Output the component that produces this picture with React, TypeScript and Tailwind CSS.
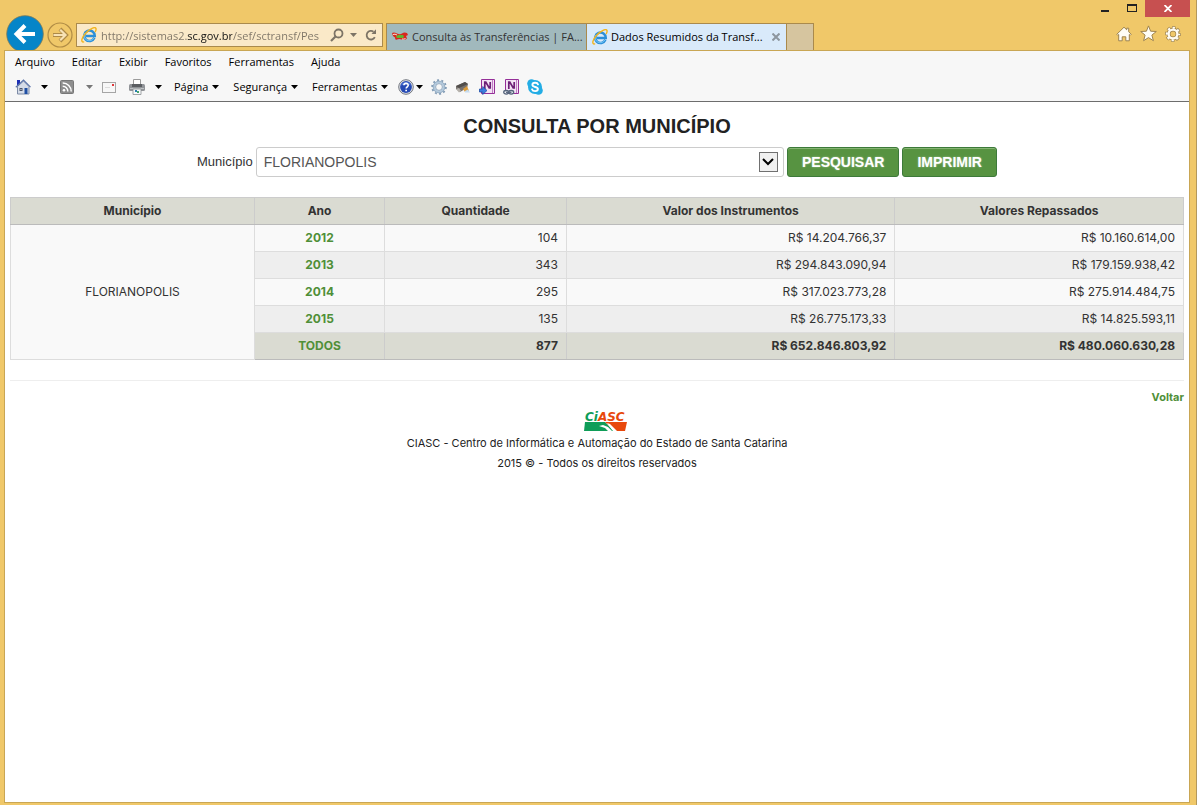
import { useState } from "react";
import type { ReactNode } from "react";

const menuItems = ["Arquivo", "Editar", "Exibir", "Favoritos", "Ferramentas", "Ajuda"];

const rows = [
  { ano: "2012", quantidade: "104", instrumentos: "R$ 14.204.766,37", repassados: "R$ 10.160.614,00" },
  { ano: "2013", quantidade: "343", instrumentos: "R$ 294.843.090,94", repassados: "R$ 179.159.938,42" },
  { ano: "2014", quantidade: "295", instrumentos: "R$ 317.023.773,28", repassados: "R$ 275.914.484,75" },
  { ano: "2015", quantidade: "135", instrumentos: "R$ 26.775.173,33", repassados: "R$ 14.825.593,11" },
];

/* ---------- Icons ---------- */

function IeIcon() {
  return (
    <svg className="size-4 shrink-0" viewBox="0 0 16 16" fill="none">
      <path
        d="M13.4 10.800A5.300 5.300 0 1 1 13.800 8.900H4.800"
        stroke="#2b8fd8"
        strokeWidth="2.500"
      />
      <path d="M12.900 10.900A5.200 5.200 0 0 1 3.600 6.200" stroke="#7fcdf7" strokeWidth="0.9" />
      <path
        d="M2.600 14.900C-.4 15.300.5 10.600 4.600 6.200 9 1.500 14-.4 14.900 1.300c.4.800.1 2-.6 3.300"
        stroke="#f2b41d"
        strokeWidth="1.400"
        strokeLinecap="round"
      />
    </svg>
  );
}

function Caret({ className = "text-black" }: { className?: string }) {
  return (
    <svg className={`h-1 w-[7px] shrink-0 ${className}`} viewBox="0 0 7 4">
      <path d="M0 0h7L3.500 4z" fill="currentColor" />
    </svg>
  );
}

function HouseIcon() {
  return (
    <svg className="size-4" viewBox="0 0 16 16">
      <path d="M2 1h3v5H2z" fill="#1d2fb4" />
      <path d="M2.500 7.500 8.500 2l5.500 5.500V15h-11.500z" fill="#d5dce8" stroke="#7d8ba6" />
      <path d="M.8 8.200 8.500 1l7 7.200" fill="none" stroke="#5b74ab" strokeWidth="1.200" />
      <path d="M9.500 9h3v6h-3z" fill="#1f4fa3" />
      <path d="M4.500 9h3v3h-3z" fill="#4c5568" />
      <path d="M5.500 10h1v1h-1z" fill="#e8eefc" />
    </svg>
  );
}

function RssIcon() {
  return (
    <svg className="size-[14px]" viewBox="0 0 14 14" fill="none">
      <rect x=".5" y=".5" width="13" height="13" rx="1" fill="#8e8e8e" stroke="#777" />
      <circle cx="4" cy="10.200" r="1.300" fill="#fff" />
      <path d="M2.700 6.300a5 5 0 0 1 5.100 5.200M2.700 3a8.300 8.300 0 0 1 8.500 8.500" stroke="#fff" strokeWidth="1.500" />
    </svg>
  );
}

function MailIcon() {
  return (
    <svg className="h-[11px] w-[14px]" viewBox="0 0 14 11">
      <rect x=".5" y=".5" width="13" height="10" fill="#f7f7f7" stroke="#a5a5a5" />
      <path d="M3 5.500h5" stroke="#dcdcdc" />
      <path d="M10 2h2v2h-2z" fill="#e0383b" />
    </svg>
  );
}

function PrinterIcon() {
  return (
    <svg className="size-4" viewBox="0 0 16 16">
      <path d="M4.500.5h7V6h-7z" fill="#fff" stroke="#9b9b9b" />
      <rect y="5" width="16" height="7" rx="1.500" fill="#909397" />
      <path d="M3 5h10v3H3z" fill="#5b5e62" />
      <path d="M1 9h14v1H1z" fill="#c0c3c6" />
      <path d="M4 10h8v5.500H4z" fill="#f8fafc" stroke="#8c8f93" strokeWidth=".8" />
      <path d="M6 11h2v2H6z" fill="#2c7fae" />
      <path d="M8 12h2v2H8z" fill="#49a66a" />
    </svg>
  );
}

function HelpIcon() {
  return (
    <svg className="size-4" viewBox="0 0 16 16">
      <circle cx="8" cy="8" r="7.300" fill="#dfe2e8" stroke="#73777f" />
      <circle cx="8" cy="8" r="5.900" fill="#2549b3" />
      <path d="M3 6.500a5.300 5.300 0 0 1 10 0Q8 4.500 3 6.500z" fill="#4f76d6" />
      <path d="M5.900 6.300c.1-2.600 4.400-2.500 4.300 0 0 1.500-2 1.500-2 3.200" fill="none" stroke="#fff" strokeWidth="1.600" />
      <path d="M7.300 10.700H9v1.600H7.300z" fill="#fff" />
    </svg>
  );
}

function GearIcon() {
  return (
    <svg className="size-4" viewBox="0 0 16 16" fill="none">
      <circle cx="8" cy="8" r="6.900" stroke="#7f99b3" strokeWidth="1.800" strokeDasharray="2 2.335" />
      <circle cx="8" cy="8" r="4.800" stroke="#b3c9dc" strokeWidth="2.400" />
      <circle cx="8" cy="8" r="5.900" stroke="#8aa4bd" strokeWidth=".8" />
      <circle cx="8" cy="8" r="3.400" fill="#f7f7f7" stroke="#7f9ab5" strokeWidth=".8" />
    </svg>
  );
}

function ScannerIcon() {
  return (
    <svg className="size-4" viewBox="0 0 16 16">
      <path d="m1 7 9-4 3 2-1 4-7 4-4-3z" fill="#77726e" />
      <path d="m1 7 9-4 3 2-9 4z" fill="#514e4b" />
      <path d="m1 10 3-1 2 3-2 1.500z" fill="#b5b1ab" />
      <path d="m8 10 4-3 2 5-4 1z" fill="#dc9c3a" />
      <path d="m10 12 3-1.500 2 3h-5z" fill="#c6dcf0" />
    </svg>
  );
}

function OneNoteIcon({ linked = false }: { linked?: boolean }) {
  return (
    <svg className="size-4" viewBox="0 0 16 16" fill="none">
      <path d="M2.500.5h13v14h-13z" fill="#f3e3f4" stroke="#952f98" />
      <path d="M13.500 1v13" stroke="#c17dc4" />
      <path d="M5.800 10V3h1l3.400 6h1V3" stroke="#6d2077" strokeWidth="1.700" />
      {linked ? (
        <g stroke="#56657c" strokeWidth="1.300" fill="#eef1f5">
          <ellipse cx="3.200" cy="13.300" rx="2.500" ry="1.800" />
          <ellipse cx="8.200" cy="13.300" rx="2.500" ry="1.800" />
          <path d="M3 13.300h5.500" />
        </g>
      ) : (
        <path d="M.5 10h3.200V7.500L8 11.500l-4.300 4V13H.5z" fill="#3d7de0" stroke="#1f4fa8" strokeWidth=".8" />
      )}
    </svg>
  );
}

function SkypeIcon() {
  return (
    <svg className="size-4" viewBox="0 0 16 16">
      <circle cx="8" cy="8" r="7" fill="#23ade5" />
      <circle cx="4.500" cy="4.500" r="4.300" fill="#23ade5" />
      <circle cx="11.500" cy="11.500" r="4.300" fill="#23ade5" />
      <path
        d="M11 5.400C10.400 3.200 5.400 3.200 5.400 5.800c0 2.900 5.500 1.500 5.500 4.300 0 2.700-5.100 2.700-5.900.2"
        fill="none"
        stroke="#fff"
        strokeWidth="1.900"
        strokeLinecap="round"
      />
    </svg>
  );
}

function SantaCatarinaIcon() {
  return (
    <svg className="size-4 shrink-0" viewBox="0 0 16 16">
      <path d="M0 4q2-1 5 .5t5 0 5-.5l1 2-2 1 1 2.500q-2 2-5 1t-5 0-2-2L1 7z" fill="#d9261c" />
      <path d="M6 6h5l1 1.500L11 9H5L4 7.500z" fill="#5fb52e" />
      <path d="M1 5.500q2-1 4 .5M10 10q2 .5 3.500-.5" stroke="#f6e3d6" fill="none" />
    </svg>
  );
}

function CiascLogo() {
  return (
    <svg className="h-6 w-11" viewBox="0 0 44 24" role="img" aria-label="CIASC">
      <text
        x="1"
        y="12"
        fontFamily="DejaVu Sans, Verdana, sans-serif"
        fontSize="12"
        fontWeight="700"
        fontStyle="italic"
      >
        <tspan fill="#0f9d58">Ci</tspan>
        <tspan fill="#e8480c">ASC</tspan>
      </text>
      <path d="M1 13h20l9 9H0z" fill="#0f9d58" />
      <path d="M21 13h22l-2 9H31z" fill="#e8480c" />
      <path d="m15 17 4-1 5 2 4 4h-4l-3-3z" fill="#fff" />
      <path d="m23 14 3 1 7 7h-4l-4-5z" fill="#fff" />
    </svg>
  );
}

/* ---------- Browser window ---------- */

function ToolButton({ label, className = "", children }: { label: string; className?: string; children: ReactNode }) {
  return (
    <button type="button" aria-label={label} className={`flex shrink-0 items-center ${className}`}>
      {children}
    </button>
  );
}

function AddressBar() {
  const [url, setUrl] = useState("http://sistemas2.sc.gov.br/sef/sctransf/Pes");

  return (
    <div className="mb-[3px] ml-[3px] flex h-6 w-[307px] shrink-0 items-center border border-[#aa8a4c] bg-[#fae9c8] pl-1 pr-[5px] text-[#7d7466]">
      <IeIcon />
      {/* the host name is drawn darker than the rest of the address */}
      <input
        aria-label="Endereço"
        value={url}
        onChange={(e) => setUrl(e.target.value)}
        className="ml-1 h-5 w-[227px] min-w-0 bg-[linear-gradient(90deg,#7d7466_86px,#111_86px,#111_131px,#7d7466_131px)] bg-clip-text text-[11px] text-transparent caret-black outline-none"
      />
      <ToolButton label="Pesquisar" className="ml-1">
        <svg className="size-[14px]" viewBox="0 0 14 14" fill="none" stroke="currentColor">
          <circle cx="8.500" cy="5.500" r="4" strokeWidth="1.800" />
          <path d="m5.500 8.500-4.500 4.500" strokeWidth="2.200" />
        </svg>
      </ToolButton>
      <ToolButton label="Mostrar endereços" className="ml-[6px]">
        <Caret className="text-[#7d7466]" />
      </ToolButton>
      <ToolButton label="Atualizar" className="ml-2">
        <svg className="size-3" viewBox="0 0 12 12" fill="none">
          <path d="M9.800 8.200A4.300 4.300 0 1 1 8.500 2.700" stroke="currentColor" strokeWidth="1.800" />
          <path d="M6.500 5H11V.3z" fill="currentColor" />
        </svg>
      </ToolButton>
    </div>
  );
}

function TitleBar() {
  return (
    <div className="flex h-[50px] items-end overflow-hidden pl-[6px]">
      <ToolButton label="Voltar" className="-mb-[3px]">
        <svg className="size-[38px]" viewBox="0 0 38 38" fill="none">
          <circle cx="19" cy="19" r="18.300" fill="#0585c8" stroke="#7a7a5a" strokeWidth=".8" />
          <path d="M29 19H11M19 10.500 10.500 19l8.500 8.500" stroke="#fff" strokeWidth="4" />
        </svg>
      </ToolButton>
      <ToolButton label="Avançar" className="mb-[2px] ml-[3px]">
        <svg className="size-[26px]" viewBox="0 0 26 26" fill="none">
          <circle cx="13" cy="13" r="12" stroke="#b08c45" strokeWidth="1.200" />
          <path d="M6 13h12M13 7l6 6-6 6" stroke="#ad8a47" strokeWidth="4" />
          <path d="M6.500 13h11M13.200 7.700l5.300 5.300-5.300 5.300" stroke="#f7e2b5" strokeWidth="2.200" />
        </svg>
      </ToolButton>
      <AddressBar />

      <div className="ml-[3px] flex h-[27px] min-w-0 border border-b-0 border-[#aa8a4c] text-[11px]">
        <button type="button" className="flex w-[199px] shrink-0 items-center gap-1 whitespace-nowrap bg-[#a1b9bd] pl-[5px] text-[#333]">
          <SantaCatarinaIcon />
          Consulta às Transferências | FA...
        </button>
        <div className="flex w-[201px] shrink-0 items-center border-x border-[#aa8a4c] bg-[#d9eafa] pl-[5px] text-black">
          <button type="button" className="flex items-center gap-[3px] whitespace-nowrap">
            <IeIcon />
            Dados Resumidos da Transf...
          </button>
          <ToolButton label="Fechar guia" className="ml-auto mr-[6px]">
            <svg className="size-2" viewBox="0 0 8 8" stroke="#8d969e" strokeWidth="2">
              <path d="m.5.5 7 7M7.500.5l-7 7" />
            </svg>
          </ToolButton>
        </div>
        <button type="button" aria-label="Nova guia" className="w-[26px] shrink-0 bg-[#d6c59f]" />
      </div>

      <div className="ml-auto flex h-full flex-col items-end justify-between">
        <div className="mr-[6px] flex items-start">
          <ToolButton label="Minimizar" className="mr-[18px] h-[19px]">
            <svg className="h-3 w-2" viewBox="0 0 8 12">
              <path d="M0 6h8v2H0z" fill="#222" />
            </svg>
          </ToolButton>
          <ToolButton label="Maximizar" className="mr-2 h-[15px]">
            <svg className="h-2 w-[10px]" viewBox="0 0 10 8">
              <path d="M0 0h10v8H0zM1 2v5h8V2z" fill="#222" fillRule="evenodd" />
            </svg>
          </ToolButton>
          <ToolButton label="Fechar" className="h-[17px] w-[45px] justify-center bg-[#c75050]">
            <svg className="h-[7px] w-2" viewBox="0 0 8 7" stroke="#fff" strokeWidth="1.800">
              <path d="m.5 0 7 7M7.500 0l-7 7" />
            </svg>
          </ToolButton>
        </div>
        <div className="mb-2 mr-[15px] flex gap-2">
          <ToolButton label="Página inicial">
            <svg className="size-4" viewBox="0 0 16 16" fill="#fffdf5" stroke="#9d8350">
              <path d="M.8 8.300 8 1.200l2.700 2.600V2.200h2v3.600l2.500 2.500-1 1-.9-.8v6.300H9.800v-4H6.200v4H2.700V8.500l-.9.800z" />
            </svg>
          </ToolButton>
          <ToolButton label="Favoritos">
            <svg className="size-[17px]" viewBox="0 0 17 17" fill="#fffdf5" stroke="#9d8350">
              <path d="m8.500.9 2.100 5.300 5.700.3-4.400 3.600 1.500 5.600-4.900-3.100-4.900 3.100 1.500-5.600L.7 6.500l5.700-.3z" />
            </svg>
          </ToolButton>
          <ToolButton label="Opções">
            <svg className="size-4" viewBox="0 0 16 16" fill="none">
              <circle cx="8" cy="8" r="6.300" stroke="#9d8350" strokeWidth="3.200" strokeDasharray="3.200 1.750" strokeDashoffset="1.600" />
              <circle cx="8" cy="8" r="4.500" stroke="#9d8350" strokeWidth="4" />
              <circle cx="8" cy="8" r="6.200" stroke="#fffdf5" strokeWidth="2" strokeDasharray="2.300 2.570" strokeDashoffset="1.150" />
              <circle cx="8" cy="8" r="4.400" stroke="#fffdf5" strokeWidth="2.400" />
            </svg>
          </ToolButton>
        </div>
      </div>
    </div>
  );
}

function MenuBar() {
  return (
    <nav className="flex h-[22px] items-center gap-[17px] px-[10px]">
      {menuItems.map((item) => (
        <button key={item} type="button">
          {item}
        </button>
      ))}
    </nav>
  );
}

function CommandBar() {
  return (
    <div className="box-content flex h-7 items-center border-b border-[#6d6d6d] pl-[10px]">
      <ToolButton label="Página inicial" className="gap-[10px]">
        <HouseIcon />
        <Caret />
      </ToolButton>
      <ToolButton label="Feeds" className="ml-3 gap-3">
        <RssIcon />
        <Caret className="text-[#777]" />
      </ToolButton>
      <ToolButton label="Ler email" className="ml-[9px]">
        <MailIcon />
      </ToolButton>
      <ToolButton label="Imprimir página" className="ml-[13px] gap-[10px]">
        <PrinterIcon />
        <Caret />
      </ToolButton>
      <div className="ml-3 flex gap-[14px]">
        {["Página", "Segurança", "Ferramentas"].map((item) => (
          <button key={item} type="button" className="flex items-center gap-1">
            {item}
            <Caret />
          </button>
        ))}
      </div>
      <ToolButton label="Ajuda" className="ml-[10px] gap-[2px]">
        <HelpIcon />
        <Caret />
      </ToolButton>
      <div className="ml-2 flex gap-2">
        <ToolButton label="Configurações">
          <GearIcon />
        </ToolButton>
        <ToolButton label="Digitalizar">
          <ScannerIcon />
        </ToolButton>
        <ToolButton label="Enviar para o OneNote">
          <OneNoteIcon />
        </ToolButton>
        <ToolButton label="Anotações vinculadas">
          <OneNoteIcon linked />
        </ToolButton>
        <ToolButton label="Skype">
          <SkypeIcon />
        </ToolButton>
      </div>
    </div>
  );
}

/* ---------- Page ---------- */

const actionClass =
  "h-[30px] rounded-[3px] border border-[#3d7a3a] bg-[#579341] px-[14px] text-sm font-bold text-white shadow-[inset_0_1px_0_#86b573] [text-shadow:0_0_2px_#ffffff80]";

function SearchForm() {
  return (
    <form
      className="mt-[6px] flex items-center justify-center gap-[3px] font-['Liberation_Sans',Arial,sans-serif]"
      onSubmit={(e) => e.preventDefault()}
    >
      <label htmlFor="municipio" className="text-[13px] text-[#333]">
        Município
      </label>
      <div className="relative w-[45%]">
        <select
          id="municipio"
          className="block h-[30px] w-full appearance-none rounded-[3px] border border-[#ccc] bg-white px-[7px] text-sm text-[#555]"
        >
          <option>FLORIANOPOLIS</option>
        </select>
        <span className="pointer-events-none absolute right-[6px] top-[5px] flex h-5 w-[19px] items-center justify-center border border-[#707070] bg-[#f0f0f0]">
          <svg className="h-2 w-3" viewBox="0 0 12 8" fill="none" stroke="#000" strokeWidth="2">
            <path d="m1 1 5 5 5-5" />
          </svg>
        </span>
      </div>
      <button type="submit" className={actionClass}>
        PESQUISAR
      </button>
      <button type="button" className={actionClass}>
        IMPRIMIR
      </button>
    </form>
  );
}

function ResultsTable() {
  const head = "border border-[#ccc] border-b-[#bbb] p-0 font-bold";
  const cell = "border border-[#ddd] px-2 py-0 text-right";
  const total = "border border-[#ccc] border-b-[#bbb] px-2 py-0 text-right";

  return (
    <table className="mt-5 w-full table-fixed border-collapse text-xs text-[#333]">
      <colgroup>
        <col className="w-[20.8%]" />
        <col className="w-[11.1%]" />
        <col className="w-[15.5%]" />
        <col className="w-[28%]" />
        <col />
      </colgroup>
      <thead>
        <tr className="h-[27px] bg-[#dadbd2]">
          <th className={head}>Município</th>
          <th className={head}>Ano</th>
          <th className={head}>Quantidade</th>
          <th className={head}>Valor dos Instrumentos</th>
          <th className={head}>Valores Repassados</th>
        </tr>
      </thead>
      <tbody>
        {rows.map((row, i) => (
          <tr key={row.ano} className="h-[27px] bg-[#f9f9f9] even:bg-[#eee]">
            {i === 0 && (
              <td rowSpan={rows.length + 1} className="border border-[#ddd] text-center">
                FLORIANOPOLIS
              </td>
            )}
            <td className="border border-[#ddd] p-0 text-center">
              <a href="#" className="font-bold text-[#4f8f38]">
                {row.ano}
              </a>
            </td>
            <td className={cell}>{row.quantidade}</td>
            <td className={cell}>{row.instrumentos}</td>
            <td className={cell}>{row.repassados}</td>
          </tr>
        ))}
        <tr className="h-[27px] bg-[#dadbd2] font-bold">
          <td className="border border-[#ccc] border-b-[#bbb] p-0 text-center">
            <a href="#" className="text-[#4f8f38]">
              TODOS
            </a>
          </td>
          <td className={total}>877</td>
          <td className={total}>R$ 652.846.803,92</td>
          <td className={total}>R$ 480.060.630,28</td>
        </tr>
      </tbody>
    </table>
  );
}

export default function App() {
  return (
    <div className="flex min-h-screen flex-col border-r border-[#b3985c] bg-[#f0c869] pb-[2px] font-['Open_Sans','Noto_Sans',sans-serif]">
      <TitleBar />
      <div className="ml-1 mr-[6px] flex flex-1 flex-col border border-[#c9a654] bg-white">
        <header className="bg-[#f7f7f7] text-[11px] text-black">
          <MenuBar />
          <CommandBar />
        </header>
        <main className="px-[5px] pt-[9px] font-[Inter,sans-serif]">
          <h1 className="text-center font-['Liberation_Sans',Arial,sans-serif] text-xl leading-[30px] font-bold text-[#222]">
            CONSULTA POR MUNICÍPIO
          </h1>
          <SearchForm />
          <ResultsTable />
          <hr className="mt-5 border-[#eee]" />
          <div className="mt-2 text-right text-[11px] leading-4">
            <a href="#" className="font-bold text-[#4f8f38]">
              Voltar
            </a>
          </div>
          <footer className="mt-1 flex flex-col items-center text-[11px] leading-5 text-[#222]">
            <span className="ml-[18px]">
              <CiascLogo />
            </span>
            <p>CIASC - Centro de Informática e Automação do Estado de Santa Catarina</p>
            <p>2015 © - Todos os direitos reservados</p>
          </footer>
        </main>
      </div>
    </div>
  );
}
